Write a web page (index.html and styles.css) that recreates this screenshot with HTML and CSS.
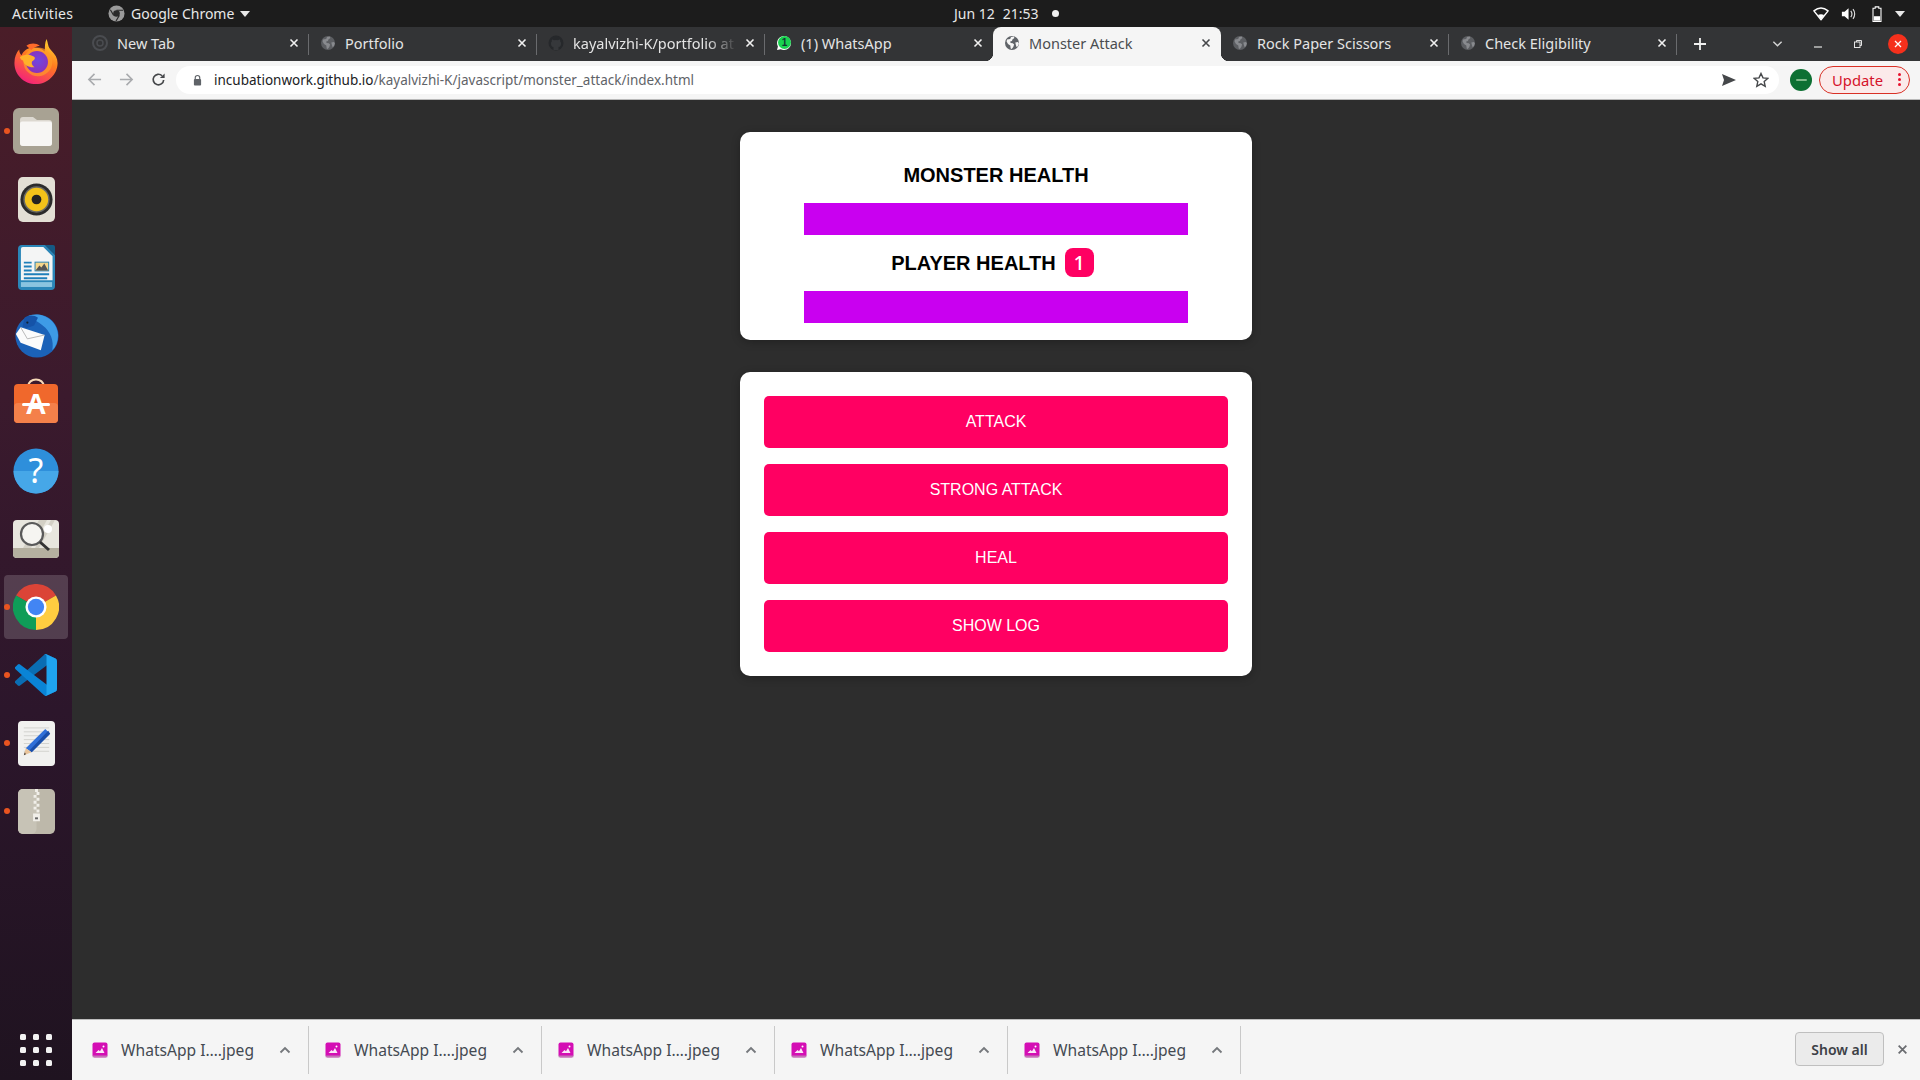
FILE: index.html
```html
<!DOCTYPE html>
<html lang="en">
<head>
<meta charset="utf-8">
<title>Monster Attack</title>
<link rel="stylesheet" href="styles.css">
</head>
<body>
<svg class="defs" width="0" height="0" aria-hidden="true">
  <defs>
    <symbol id="globe" viewBox="0 0 16 16">
      <circle cx="8" cy="8" r="7" fill="currentColor"/>
      <path d="M3 4.500l3.200-.6.800-2 2.800-.4.600 1.500-2 1.400-.4 1.600-1.800.4.400 1.600 2.200.2 1.300 1.300-.8 2.400-1.600 2-1-.3-.4-3-2.300-1.600-1.400-2.600zM11.300 7.500l2.700-.5.900 1.500-1 2.800-1.400.8-.6-2.200z" fill="var(--cut)"/>
    </symbol>
    <symbol id="x" viewBox="0 0 10 10">
      <path d="M1.500 1.500l7 7M8.500 1.500l-7 7" fill="none" stroke="currentColor" stroke-width="1.600"/>
    </symbol>
    <symbol id="up" viewBox="0 0 12 8">
      <path d="M1.500 6.500L6 2l4.500 4.500" fill="none" stroke="currentColor" stroke-width="1.800"/>
    </symbol>
    <symbol id="jpeg" viewBox="0 0 16 16">
      <rect x="0.500" y="0.500" width="15" height="15" rx="2" fill="#d40eb4"/>
      <rect x="0.500" y="13.500" width="15" height="2" fill="#b9b9b9" opacity=".6"/>
      <path d="M3.500 11l3-3 1.500 1.200L10 6l2.500 5z" fill="#fff" opacity=".9"/>
      <circle cx="11.500" cy="4.500" r="1" fill="#fff"/>
    </symbol>
  </defs>
</svg>

<header class="topbar">
  <div class="topbar-left">
    <span class="activities">Activities</span>
    <span class="app-menu">
      <svg class="app-icon" viewBox="0 0 18 18"><circle cx="9" cy="9" r="8.500" fill="#9a9a9a"/><circle cx="9" cy="9" r="3.500" fill="#2a2a2a"/><path d="M9 5.500h7M6 11l-3.500-6M12 11l-3.500 6" stroke="#2a2a2a" stroke-width="1.200"/></svg>
      <span>Google Chrome</span>
      <span class="caret"></span>
    </span>
  </div>
  <div class="clock"><span>Jun 12</span><span>21:53</span><i class="clock-dot"></i></div>
  <div class="tray">
    <svg class="tray-icon" viewBox="0 0 18 16"><path d="M1 4.500C6 .5 12 .5 17 4.500L9 14.500z" fill="none" stroke="#fff" stroke-width="1.600" stroke-linejoin="round"/><path d="M5.500 9.200C7.500 7.800 10.500 7.800 12.500 9.200L9 14z" fill="#fff"/></svg>
    <svg class="tray-icon" viewBox="0 0 18 16"><path d="M1 5.500h3L8.500 1.500v13L4 10.500H1z" fill="#fff"/><path d="M11 4.500c1.500 2 1.500 5 0 7M13.500 2.500c2.500 3 2.500 8 0 11" fill="none" stroke="#ddd" stroke-width="1.300"/></svg>
    <svg class="tray-icon battery" viewBox="0 0 12 18"><path d="M4 1h4v1.500h2.500v15h-9v-15H4z" fill="none" stroke="#fff" stroke-width="1.200"/><rect x="2.500" y="11.500" width="7" height="5" fill="#fff"/></svg>
    <span class="caret tray-caret"></span>
  </div>
</header>

<div class="desktop">
  <nav class="dock">
    <div class="dock-item">
      <svg viewBox="0 0 48 48" class="dock-icon raised">
        <defs>
          <linearGradient id="ffa" x1="0.800" y1="0" x2="0.300" y2="1"><stop offset="0" stop-color="#ffd52e"/><stop offset=".45" stop-color="#ff7a1f"/><stop offset="1" stop-color="#f3207c"/></linearGradient>
          <radialGradient id="ffb" cx=".55" cy=".45" r=".6"><stop offset="0" stop-color="#6f47e0"/><stop offset="1" stop-color="#8e2fb5"/></radialGradient>
        </defs>
        <path d="M35 1c2 5 1 8 5 12 4 4 6.500 8 6.500 13C46.500 38 36 48 24 48 11 48 1.500 38 1.500 26c0-6 2-11 5-14 0 3 1 5 2.500 6 2-5 7-8 12-8 4 0 9 1 12 4C33.500 9 33 5 35 1z" fill="url(#ffa)"/>
        <circle cx="26" cy="25" r="15" fill="#ff9a2a" opacity=".7"/>
        <circle cx="25" cy="25" r="11.500" fill="url(#ffb)"/>
        <path d="M7 20c5-3 9-3 14-1 3 1 2 3.500-.5 5-2 1.500-.5 5 2 6.500-6 .5-11-2-12-7-1 0-2.500-1.500-3.500-3.500z" fill="#ffb12a"/>
        <path d="M14 8c4-3 10-3 14 0-3 .5-7 2-9 4.500z" fill="#ff6a2a"/>
      </svg>
    </div>
    <div class="dock-item">
      <i class="run-dot"></i>
      <svg viewBox="0 0 46 46" class="dock-icon files">
        <rect width="46" height="46" rx="6" fill="#a8a293"/>
        <path d="M7 12c0-2 1-3 3-3h10l4 3h12c2 0 3 1 3 3v20c0 2-1 3-3 3H10c-2 0-3-1-3-3z" fill="#dcd8d0"/>
        <path d="M7 15.500c0-1 1-2 2-2h28c1 0 2 1 2 2V35c0 2-1 3-3 3H10c-2 0-3-1-3-3z" fill="#f7f6f4"/>
      </svg>
    </div>
    <div class="dock-item">
      <svg viewBox="0 0 38 46" class="dock-icon tall">
        <rect width="38" height="46" rx="5" fill="#e3dfd5"/>
        <circle cx="19" cy="23" r="16.500" fill="#2b2b2b"/>
        <circle cx="19" cy="23" r="13.500" fill="#6a6a66"/>
        <circle cx="19" cy="23" r="12" fill="#f2c21a"/>
        <circle cx="19" cy="23" r="5" fill="#222"/>
      </svg>
    </div>
    <div class="dock-item">
      <svg viewBox="0 0 38 46" class="dock-icon tall">
        <path d="M4 0h24l10 10v32a4 4 0 0 1-4 4H4a4 4 0 0 1-4-4V4a4 4 0 0 1 4-4z" fill="#2a86b8"/>
        <path d="M5 2h21l9.500 9.500V36H3V4a2 2 0 0 1 2-2z" fill="#f4f5f5"/>
        <path d="M28 0h8a2 2 0 0 1 2 2v8z" fill="#155a85"/>
        <path d="M6 17h8v2H6zM6 21h8v2H6zM6 25h8v2H6zM6 29h26v2H6zM6 33h24v2H6z" fill="#1f80ba"/>
        <rect x="17" y="17" width="15" height="10" fill="#2a86b8"/>
        <rect x="18" y="18" width="13" height="8" fill="#f6d68a"/>
        <path d="M18 26l4-5 2 2 3-4 4 7z" fill="#555"/>
        <rect x="3" y="38" width="32" height="5" fill="#8ac4e0"/>
      </svg>
    </div>
    <div class="dock-item">
      <svg viewBox="0 0 48 48" class="dock-icon">
        <circle cx="25" cy="25" r="22.500" fill="#1b62b8"/>
        <path d="M16 4C30-1 46 8 47 24c0 6-2 12-6 16 2-10-2-20-10-26-5-4-10-6-15-10z" fill="#3e9be6"/>
        <path d="M12 6c4-3 10-3 14 0l-4 8-8 3-4-2z" fill="#1553a8"/>
        <path d="M3 23L8 16l25 8-4 16-21-8z" fill="#fbfbfb"/>
        <path d="M8 16l7 12 18-4" fill="none" stroke="#a5a5a5" stroke-width=".8"/>
        <circle cx="15" cy="11" r="1.200" fill="#123"/>
      </svg>
    </div>
    <div class="dock-item">
      <svg viewBox="0 0 44 48" class="dock-icon raised">
        <path d="M14 10c0-10 16-10 16 0" fill="none" stroke="#f6d9b8" stroke-width="2"/>
        <rect y="7" width="44" height="39" rx="4" fill="#f0682c"/>
        <rect y="26" width="44" height="20" rx="4" fill="#f4804a"/>
        <text x="22" y="37" class="store-a">A</text>
        <rect x="8" y="26" width="28" height="3" rx="1.500" fill="#fff"/>
      </svg>
    </div>
    <div class="dock-item">
      <svg viewBox="0 0 46 46" class="dock-icon files">
        <circle cx="23" cy="23" r="22.500" fill="#2e8fdb"/>
        <path d="M.500 23a22.500 22.500 0 0 0 45 0z" fill="#46a7e8"/>
        <text x="23" y="35" class="help-mark">?</text>
      </svg>
    </div>
    <div class="dock-item">
      <svg viewBox="0 0 46 38" class="dock-icon wide">
        <rect width="46" height="38" rx="4" fill="#e8e6de"/>
        <path d="M26 0h8L18 28h-8zM38 0h4L26 28h-4z" fill="#d3d0c5"/>
        <path d="M0 28h46v6a4 4 0 0 1-4 4H4a4 4 0 0 1-4-4z" fill="#b5b0a0"/>
        <circle cx="35" cy="9" r="4" fill="#fff"/>
        <circle cx="19" cy="14" r="11" fill="#f6f5f1" stroke="#5a5a5a" stroke-width="2.200"/>
        <path d="M27 22l9 8" stroke="#333" stroke-width="3"/>
      </svg>
    </div>
    <div class="dock-item dock-item-active">
      <i class="run-dot"></i>
      <div class="dock-highlight">
        <svg viewBox="0 0 48 48" class="dock-icon chrome">
          <path d="M24 24L44.800 12A24 24 0 0 0 3.200 12z" fill="#db4437"/>
          <path d="M24 24L3.200 12A24 24 0 0 0 24 48z" fill="#0f9d58"/>
          <path d="M24 24L24 48A24 24 0 0 0 44.800 12z" fill="#ffcd40"/>
          <circle cx="24" cy="24" r="11" fill="#fff"/>
          <circle cx="24" cy="24" r="8.500" fill="#4285f4"/>
        </svg>
      </div>
    </div>
    <div class="dock-item">
      <i class="run-dot"></i>
      <svg viewBox="0 0 100 100" class="dock-icon code">
        <path d="M96.500 10.800L75.900.9a6.200 6.200 0 0 0-7.100 1.200L1.300 63.600a4.200 4.200 0 0 0 0 6.200l5.500 5a4.200 4.200 0 0 0 5.300.2L93.300 13.600A4.100 4.100 0 0 1 100 16.800v-.2a6.200 6.200 0 0 0-3.500-5.800z" fill="#0a6db3"/>
        <path d="M96.500 89.200L75.900 99.100a6.200 6.200 0 0 1-7.100-1.200L1.300 36.400a4.200 4.200 0 0 1 0-6.200l5.500-5a4.200 4.200 0 0 1 5.300-.2l81.200 61.400A4.100 4.100 0 0 0 100 83.200v.2a6.200 6.200 0 0 1-3.500 5.800z" fill="#0a84d6"/>
        <path d="M75.900 99.100a6.200 6.200 0 0 1-7.100-1.200c2.300 2.300 6.200.7 6.200-2.600V4.700c0-3.300-3.900-4.900-6.200-2.600a6.200 6.200 0 0 1 7.100-1.200l20.600 9.900a6.200 6.200 0 0 1 3.500 5.600v67.200a6.200 6.200 0 0 1-3.500 5.600z" fill="#1fa4f0"/>
      </svg>
    </div>
    <div class="dock-item">
      <i class="run-dot"></i>
      <svg viewBox="0 0 38 46" class="dock-icon tall">
        <rect width="38" height="46" rx="4" fill="#f1f1ef"/>
        <path d="M6 7h26M6 11h26M6 15h26M6 19h26M6 23h26M6 27h26M6 31h26" stroke="#d2d2ce"/>
        <path d="M28 8l5 5-19 19-6-4z" fill="#2f6fd8"/>
        <path d="M31 10l2 3-19 19-2-2z" fill="#1a4ea8"/>
        <path d="M8 28l6 4-8 3z" fill="#e8c39a"/>
        <path d="M6 35l2-1-1-2z" fill="#333"/>
      </svg>
    </div>
    <div class="dock-item">
      <i class="run-dot"></i>
      <svg viewBox="0 0 38 46" class="dock-icon tall">
        <rect width="38" height="46" rx="5" fill="#bdb8aa"/>
        <rect width="19" height="46" rx="5" fill="#c7c3b6"/>
        <path d="M17.500 0h3v3h-3zM19 3h3v3h-3zM16 6h3v3h-3zM19 9h3v3h-3zM16 12h3v3h-3zM19 15h3v3h-3zM16 18h3v3h-3zM19 21h3v3h-3z" fill="#f1efe9"/>
        <rect x="15.500" y="25" width="7" height="8" fill="#f1efe9"/>
        <rect x="17.500" y="29" width="3" height="2" fill="#666"/>
      </svg>
    </div>
    <div class="dock-apps">
      <i></i><i></i><i></i><i></i><i></i><i></i><i></i><i></i><i></i>
    </div>
  </nav>

  <div class="browser">
    <div class="tabstrip">
      <div class="tab tab-sep">
        <svg class="favicon" viewBox="0 0 16 16"><circle cx="8" cy="8" r="7" fill="none" stroke="#4a4c50" stroke-width="2"/><circle cx="8" cy="8" r="3" fill="none" stroke="#4a4c50" stroke-width="1.500"/></svg>
        <span class="tab-title">New Tab</span>
        <svg class="tab-close"><use href="#x"/></svg>
      </div>
      <div class="tab tab-sep">
        <svg class="favicon globe-dim"><use href="#globe"/></svg>
        <span class="tab-title">Portfolio</span>
        <svg class="tab-close"><use href="#x"/></svg>
      </div>
      <div class="tab tab-sep">
        <svg class="favicon" viewBox="0 0 16 16"><circle cx="8" cy="8" r="7.500" fill="#26282b"/><path d="M5.500 15v-3c-2-.2-2.500-1.500-2.500-3.500 0-1 .3-1.500.8-2-.2-.8 0-1.500.2-2 .8 0 1.500.4 2 .8a7 7 0 0 1 4 0c.5-.4 1.200-.8 2-.8.2.5.4 1.200.2 2 .5.500.8 1 .8 2 0 2-.5 3.300-2.500 3.500v3z" fill="#36383b"/></svg>
        <span class="tab-title tab-title-fade">kayalvizhi-K/portfolio at</span>
        <svg class="tab-close"><use href="#x"/></svg>
      </div>
      <div class="tab">
        <svg class="favicon" viewBox="0 0 16 16"><path d="M8 1a7 7 0 0 1 0 14 7 7 0 0 1-3.300-.8L1 15l.9-3.600A7 7 0 0 1 8 1z" fill="#fff"/><circle cx="8.500" cy="7.500" r="6.500" fill="#19d34f"/><text x="8.500" y="11" class="wa-count">1</text></svg>
        <span class="tab-title">(1) WhatsApp</span>
        <svg class="tab-close"><use href="#x"/></svg>
      </div>
      <div class="tab tab-active">
        <svg class="favicon globe-active"><use href="#globe"/></svg>
        <span class="tab-title">Monster Attack</span>
        <svg class="tab-close"><use href="#x"/></svg>
      </div>
      <div class="tab tab-sep">
        <svg class="favicon globe-dim"><use href="#globe"/></svg>
        <span class="tab-title">Rock Paper Scissors</span>
        <svg class="tab-close"><use href="#x"/></svg>
      </div>
      <div class="tab tab-sep">
        <svg class="favicon globe-dim"><use href="#globe"/></svg>
        <span class="tab-title">Check Eligibility</span>
        <svg class="tab-close"><use href="#x"/></svg>
      </div>
      <svg class="new-tab" viewBox="0 0 14 14"><path d="M7 1v12M1 7h12" stroke="#f0f0f0" stroke-width="1.800"/></svg>
      <svg class="tab-list" viewBox="0 0 12 8"><path d="M1.500 1.500L6 6l4.500-4.500" fill="none" stroke="#d5d5d5" stroke-width="1.500"/></svg>
      <div class="win-controls">
        <svg class="win-btn" viewBox="0 0 10 10"><path d="M1 8h8" stroke="#e5e5e5" stroke-width="1.200"/></svg>
        <svg class="win-btn" viewBox="0 0 10 10"><rect x="1.500" y="3" width="5.500" height="5.500" fill="none" stroke="#e5e5e5"/><path d="M3.500 3V1.500h5v5H7" fill="none" stroke="#e5e5e5"/></svg>
        <span class="win-close"><svg viewBox="0 0 10 10"><path d="M2 2l6 6M8 2l-6 6" stroke="#fff" stroke-width="1.300"/></svg></span>
      </div>
    </div>

    <div class="toolbar">
      <svg class="nav-icon" viewBox="0 0 16 16"><path d="M15 8H2M8 2L2 8l6 6" fill="none" stroke="#a9abae" stroke-width="1.700"/></svg>
      <svg class="nav-icon" viewBox="0 0 16 16"><path d="M1 8h13M8 2l6 6-6 6" fill="none" stroke="#a9abae" stroke-width="1.700"/></svg>
      <svg class="nav-icon" viewBox="0 0 16 16"><path d="M13.500 8.500A5.600 5.600 0 1 1 11.800 4" fill="none" stroke="#45474a" stroke-width="1.800"/><path d="M9.500 6.500H14.500V1.500z" fill="#45474a"/></svg>
      <div class="omnibox">
        <svg class="lock" viewBox="0 0 10 12"><path d="M2.500 5V3.500a2.500 2.500 0 0 1 5 0V5" fill="none" stroke="#5f6368" stroke-width="1.300"/><rect x="1" y="5" width="8" height="7" rx="1" fill="#5f6368"/></svg>
        <span class="url"><span class="url-host">incubationwork.github.io</span>/kayalvizhi-K/javascript/monster_attack/index.html</span>
        <svg class="omni-icon" viewBox="0 0 16 16"><path d="M1 2l14 6-14 6 2-6z" fill="#45474a"/></svg>
        <svg class="omni-icon" viewBox="0 0 16 16"><path d="M8 1.500l2 4.400 4.700.5-3.500 3.200 1 4.700L8 11.900l-4.200 2.400 1-4.700L1.300 6.400 6 5.900z" fill="none" stroke="#45474a" stroke-width="1.400"/></svg>
      </div>
      <span class="avatar"><span class="avatar-mark"></span></span>
      <div class="update-pill">
        <span>Update</span>
        <span class="update-dots"><i></i><i></i><i></i></span>
      </div>
    </div>

    <main class="page">
      <section class="card health-card">
        <h2 class="health-title">MONSTER HEALTH</h2>
        <div class="health-bar"></div>
        <h2 class="health-title">PLAYER HEALTH <span class="lives">1</span></h2>
        <div class="health-bar"></div>
      </section>
      <section class="card controls">
        <button class="action">ATTACK</button>
        <button class="action">STRONG ATTACK</button>
        <button class="action">HEAL</button>
        <button class="action">SHOW LOG</button>
      </section>
    </main>

    <footer class="downloads">
      <div class="dl-item"><svg class="dl-icon"><use href="#jpeg"/></svg><span class="dl-name">WhatsApp I….jpeg</span><svg class="dl-up"><use href="#up"/></svg></div>
      <div class="dl-item"><svg class="dl-icon"><use href="#jpeg"/></svg><span class="dl-name">WhatsApp I….jpeg</span><svg class="dl-up"><use href="#up"/></svg></div>
      <div class="dl-item"><svg class="dl-icon"><use href="#jpeg"/></svg><span class="dl-name">WhatsApp I….jpeg</span><svg class="dl-up"><use href="#up"/></svg></div>
      <div class="dl-item"><svg class="dl-icon"><use href="#jpeg"/></svg><span class="dl-name">WhatsApp I….jpeg</span><svg class="dl-up"><use href="#up"/></svg></div>
      <div class="dl-item"><svg class="dl-icon"><use href="#jpeg"/></svg><span class="dl-name">WhatsApp I….jpeg</span><svg class="dl-up"><use href="#up"/></svg></div>
      <button class="show-all">Show all</button>
      <svg class="dl-close"><use href="#x"/></svg>
    </footer>
  </div>
</div>
</body>
</html>
```

FILE: styles.css
```css
* { box-sizing: border-box; }

html, body {
  margin: 0;
  height: 100%;
  overflow: hidden;
}

body {
  display: flex;
  flex-direction: column;
  height: 1080px;
  background: #2d2d2d;
  font-family: "Noto Sans", "Open Sans", sans-serif;
}

.defs { position: absolute; }

/* GNOME top bar */
.topbar {
  flex: 0 0 27px;
  display: flex;
  align-items: center;
  background: #1c1c1c;
  color: #e8e8e8;
  font-size: 14px;
}

.topbar-left {
  flex: 0 0 954px;
  display: flex;
  align-items: center;
  padding-left: 12px;
}

.activities {
  width: 96px;
  letter-spacing: 0.3px;
}

.app-menu {
  display: flex;
  align-items: center;
  gap: 6px;
}

.app-icon { width: 17px; height: 17px; }

.caret {
  width: 0;
  height: 0;
  border: 5px solid transparent;
  border-top: 6px solid #e8e8e8;
  border-bottom: 0;
}

.clock {
  display: flex;
  align-items: center;
  gap: 8px;
}

.clock-dot {
  width: 7px;
  height: 7px;
  margin-left: 5px;
  border-radius: 50%;
  background: #f0f0f0;
}

.tray {
  flex: 1;
  display: flex;
  align-items: center;
  justify-content: flex-end;
  gap: 12px;
  padding-right: 15px;
}

.tray-icon { width: 16px; height: 16px; }
.tray-caret { margin-left: -2px; }

/* Desktop */
.desktop {
  flex: 1;
  display: flex;
  min-height: 0;
}

.dock {
  flex: 0 0 72px;
  display: flex;
  flex-direction: column;
  padding-top: 2px;
  background: linear-gradient(180deg, #4a1d28 0%, #3b1a2d 35%, #2c162b 65%, #1f1320 100%);
}

.dock-item {
  position: relative;
  flex: 0 0 68px;
  display: flex;
  align-items: center;
  justify-content: center;
}

.dock-icon { width: 46px; height: 48px; display: block; }
.dock-icon.raised { margin-top: -4px; }
.dock-icon.files { width: 46px; height: 46px; }
.dock-icon.tall { width: 37px; height: 45px; }
.dock-icon.wide { width: 46px; height: 38px; }
.dock-icon.chrome { width: 46px; height: 46px; }
.dock-icon.code { width: 42px; height: 42px; }

.dock-highlight {
  width: 64px;
  height: 64px;
  display: flex;
  align-items: center;
  justify-content: center;
  border-radius: 4px;
  background: rgba(255, 255, 255, 0.17);
}

.run-dot {
  position: absolute;
  left: 4px;
  top: 50%;
  width: 6px;
  height: 6px;
  margin-top: -3px;
  border-radius: 50%;
  background: #e95420;
  z-index: 1;
}

.store-a {
  font: 700 29px "Liberation Sans", sans-serif;
  text-anchor: middle;
  fill: #fff;
}

.help-mark {
  font: 400 34px "Noto Sans", sans-serif;
  text-anchor: middle;
  fill: #fff;
}

.wa-count {
  font: 700 10px "Liberation Sans", sans-serif;
  text-anchor: middle;
  fill: #133;
}

.dock-apps {
  margin: auto auto 14px;
  display: grid;
  grid-template-columns: repeat(3, 6px);
  gap: 7px;
}

.dock-apps i {
  width: 6px;
  height: 6px;
  border-radius: 1.500px;
  background: #f2f2f2;
}

/* Browser */
.browser {
  flex: 1;
  display: flex;
  flex-direction: column;
  min-width: 0;
}

.tabstrip {
  flex: 0 0 34px;
  display: flex;
  align-items: stretch;
  padding-left: 9px;
  background: #333436;
}

.tab {
  position: relative;
  flex: 0 0 228px;
  min-width: 0;
  display: flex;
  align-items: center;
  padding: 0 10px 3px 11px;
  color: #e4e4e4;
  font-size: 14.500px;
  --cut: #8f9195;
}

.tab-sep::after {
  content: "";
  position: absolute;
  right: 0;
  top: 7px;
  bottom: 6px;
  width: 1px;
  background: #6a6b6e;
}

.tab-active {
  background: #f5f5f5;
  color: #4a4c50;
  border-radius: 8px 8px 0 0;
}

.tab-active::before,
.tab-active::after {
  content: "";
  position: absolute;
  bottom: 0;
  width: 8px;
  height: 8px;
  background: radial-gradient(circle at 0 0, transparent 8px, #f5f5f5 8.500px);
}

.tab-active::before { left: -8px; }
.tab-active::after {
  right: -8px;
  background: radial-gradient(circle at 100% 0, transparent 8px, #f5f5f5 8.500px);
}

.favicon {
  flex: 0 0 16px;
  width: 16px;
  height: 16px;
  margin-right: 9px;
}

.globe-dim { color: #5c5e62; --cut: #888a8e; }
.globe-active { color: #5f6368; --cut: #f5f5f5; }

.tab-title {
  flex: 1;
  min-width: 0;
  white-space: nowrap;
}

.tab-title-fade {
  -webkit-mask-image: linear-gradient(90deg, #000 82%, transparent 100%);
  mask-image: linear-gradient(90deg, #000 82%, transparent 100%);
}

.tab-close {
  flex: 0 0 10px;
  width: 10px;
  height: 10px;
  margin-left: 8px;
  color: #f0f0f0;
}

.tab-active .tab-close { color: #45474a; }

.new-tab {
  width: 14px;
  height: 14px;
  margin: auto 0 auto 16px;
}

.tab-list {
  width: 11px;
  height: 8px;
  margin: auto 0 auto 65px;
}

.win-controls {
  display: flex;
  align-items: center;
  gap: 30px;
  margin-left: 30px;
}

.win-btn { width: 10px; height: 10px; }

.win-close {
  width: 20px;
  height: 20px;
  margin-left: -5px;
  display: flex;
  align-items: center;
  justify-content: center;
  border-radius: 50%;
  background: #f5301c;
}

.win-close svg { width: 10px; height: 10px; }

.toolbar {
  flex: 0 0 39px;
  display: flex;
  align-items: center;
  padding: 0 10px 1px 15px;
  background: #f5f5f5;
  border-bottom: 1px solid #b9b9b9;
}

.nav-icon {
  flex: 0 0 15px;
  width: 15px;
  height: 15px;
  margin-right: 17px;
}

.omnibox {
  flex: 1;
  height: 28px;
  margin-left: -7px;
  display: flex;
  align-items: center;
  padding: 0 10px 0 17px;
  border-radius: 14px;
  background: #fff;
}

.lock { width: 9px; height: 12px; margin-right: 12px; }

.url {
  flex: 1;
  font-size: 13.500px;
  color: #5f6368;
  white-space: nowrap;
}

.url-host { color: #202124; }

.omni-icon {
  width: 16px;
  height: 16px;
  margin-left: 16px;
}

.avatar {
  width: 22px;
  height: 22px;
  margin: 0 7px 0 11px;
  display: flex;
  align-items: center;
  justify-content: center;
  border-radius: 50%;
  background: #0d7033;
}

.avatar-mark {
  width: 11px;
  height: 2px;
  border-radius: 1px;
  background: #7fb98a;
}

.update-pill {
  width: 91px;
  height: 28px;
  display: flex;
  align-items: center;
  justify-content: space-between;
  padding: 0 8px 0 12px;
  border: 1px solid #d93025;
  border-radius: 14px;
  background: #fbeaea;
  color: #d5122a;
  font-size: 14.800px;
}

.update-dots {
  display: flex;
  flex-direction: column;
  gap: 2px;
}

.update-dots i {
  width: 3px;
  height: 3px;
  border-radius: 50%;
  background: #e8112d;
}

/* Page content */
.page {
  flex: 1;
  min-height: 0;
  display: flex;
  flex-direction: column;
  align-items: center;
  padding-top: 32px;
  gap: 32px;
  background: #2d2d2d;
  font-family: "Liberation Sans", Arial, sans-serif;
}

.card {
  width: 512px;
  background: #fff;
  border-radius: 10px;
  box-shadow: 0 2px 8px rgba(0, 0, 0, 0.26);
}

.health-card {
  height: 208px;
  display: flex;
  flex-direction: column;
  align-items: center;
  padding-top: 16px;
}

.health-title {
  height: 29px;
  margin: 12px 0 14px;
  padding-top: 2px;
  display: flex;
  align-items: center;
  gap: 9px;
  font-size: 20px;
  font-weight: 700;
  line-height: 27px;
  color: #000;
}

.health-title + .health-bar + .health-title {
  margin: 13px 0 14px;
}

.health-bar {
  width: 384px;
  height: 32px;
  background: #c900f0;
}

.lives {
  width: 29px;
  height: 29px;
  margin: -2px 7px 0 0;
  display: flex;
  align-items: center;
  justify-content: center;
  border-radius: 8px;
  background: #ff0062;
  color: #fff;
  font-family: "Noto Sans", sans-serif;
  font-size: 20px;
  font-weight: 500;
}

.controls {
  display: flex;
  flex-direction: column;
  gap: 16px;
  padding: 24px;
}

.action {
  height: 52px;
  border: 0;
  border-radius: 5px;
  background: #ff0062;
  color: #fff;
  font-family: "Liberation Sans", Arial, sans-serif;
  font-size: 16px;
}

/* Download shelf */
.downloads {
  flex: 0 0 61px;
  display: flex;
  align-items: center;
  padding: 0 0 1px 4px;
  background: #f5f5f5;
  border-top: 1px solid #bdbdbd;
}

.dl-item {
  position: relative;
  flex: 0 0 233px;
  display: flex;
  align-items: center;
  height: 48px;
  padding-left: 16px;
  border-right: 1px solid #c9c9c9;
}

.dl-icon { width: 16px; height: 16px; margin-right: 13px; }

.dl-name {
  width: 158px;
  font-size: 15.600px;
  color: #444a52;
  white-space: nowrap;
}

.dl-up { width: 12px; height: 8px; color: #75787c; }

.show-all {
  width: 89px;
  height: 34px;
  margin-left: auto;
  margin-bottom: 1px;
  border: 1px solid #bfbfbf;
  border-radius: 4px;
  background: #ebebeb;
  color: #3c4046;
  font-family: inherit;
  font-size: 14px;
  font-weight: 600;
}

.dl-close {
  width: 11px;
  height: 11px;
  margin: 0 12px 0 13px;
  color: #6a6c70;
}
```
